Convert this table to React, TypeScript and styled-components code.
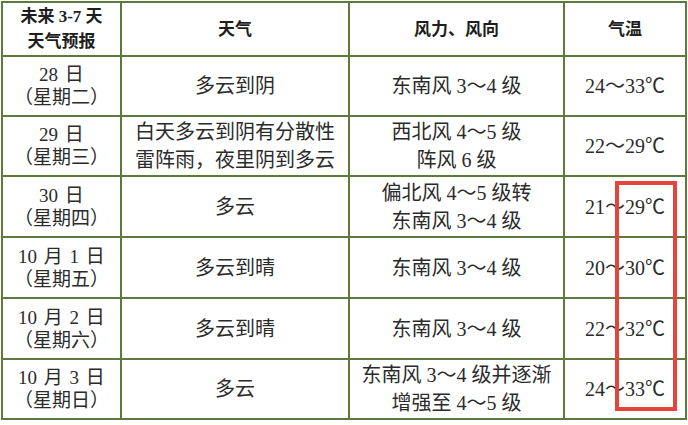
import React from "react";
import styled, { createGlobalStyle } from "styled-components";

const Global = createGlobalStyle`
  html, body { margin: 0; padding: 0; background: #ffffff; }
  body { font-family: "Liberation Serif", "Noto Sans CJK SC", serif; }
`;

const LINE = "#5b7a3c";

const Page = styled.div`
  position: relative;
  width: 688px;
  height: 425px;
  padding: 1px 0 0 1px;
  box-sizing: border-box;
  overflow: hidden;
`;

const Table = styled.table`
  border-collapse: collapse;
  table-layout: fixed;
  width: 684px;
  color: #2b2b2b;
`;

const Row = styled.tr<{ $h: number }>`
  height: ${(p) => p.$h}px;
`;

const HeadCell = styled.th`
  border: 2px solid ${LINE};
  padding: 0;
  font-family: "Liberation Serif", "Noto Sans CJK SC", serif;
  font-weight: 700;
  font-size: 17px;
  line-height: 25px;
  text-align: center;
  vertical-align: middle;
  color: #1e1e1e;
`;

const Cell = styled.td<{ $kind?: "date" | "text" }>`
  border: 2px solid ${LINE};
  padding: 0;
  font-family: "Liberation Serif", "Noto Sans CJK SC", serif;
  font-weight: 400;
  font-size: ${(p) => (p.$kind === "date" ? 19 : 20)}px;
  line-height: ${(p) => (p.$kind === "date" ? 23 : 28)}px;
  word-spacing: ${(p) => (p.$kind === "date" ? 2 : 0)}px;
  text-align: center;
  vertical-align: middle;
  white-space: nowrap;
`;

const Highlight = styled.div`
  position: absolute;
  left: 615px;
  top: 181px;
  width: 62px;
  height: 230px;
  box-sizing: border-box;
  border: 4px solid #e5443b;
  pointer-events: none;
`;

type Day = { date: string; week: string; weather: string[]; wind: string[]; temp: string };

const days: Day[] = [
  { date: "28 日", week: "（星期二）", weather: ["多云到阴"], wind: ["东南风 3～4 级"], temp: "24～33℃" },
  { date: "29 日", week: "（星期三）", weather: ["白天多云到阴有分散性", "雷阵雨，夜里阴到多云"], wind: ["西北风 4～5 级", "阵风 6 级"], temp: "22～29℃" },
  { date: "30 日", week: "（星期四）", weather: ["多云"], wind: ["偏北风 4～5 级转", "东南风 3～4 级"], temp: "21～29℃" },
  { date: "10 月 1 日", week: "（星期五）", weather: ["多云到晴"], wind: ["东南风 3～4 级"], temp: "20～30℃" },
  { date: "10 月 2 日", week: "（星期六）", weather: ["多云到晴"], wind: ["东南风 3～4 级"], temp: "22～32℃" },
  { date: "10 月 3 日", week: "（星期日）", weather: ["多云"], wind: ["东南风 3～4 级并逐渐", "增强至 4～5 级"], temp: "24～33℃" },
];

const heights = [60, 60, 61, 61, 61, 60];

const Lines = ({ items }: { items: string[] }) => (
  <>
    {items.map((t, i) => (
      <React.Fragment key={i}>
        {i > 0 && <br />}
        {t}
      </React.Fragment>
    ))}
  </>
);

export default function App() {
  return (
    <Page>
      <Global />
      <Table>
        <colgroup>
          <col style={{ width: 119 }} />
          <col style={{ width: 228 }} />
          <col style={{ width: 215 }} />
          <col style={{ width: 122 }} />
        </colgroup>
        <thead>
          <Row $h={54}>
            <HeadCell>
              未来 3-7 天
              <br />
              天气预报
            </HeadCell>
            <HeadCell>天气</HeadCell>
            <HeadCell>风力、风向</HeadCell>
            <HeadCell>气温</HeadCell>
          </Row>
        </thead>
        <tbody>
          {days.map((d, i) => (
            <Row key={d.date} $h={heights[i]}>
              <Cell $kind="date">
                {d.date}
                <br />
                {d.week}
              </Cell>
              <Cell>
                <Lines items={d.weather} />
              </Cell>
              <Cell>
                <Lines items={d.wind} />
              </Cell>
              <Cell>{d.temp}</Cell>
            </Row>
          ))}
        </tbody>
      </Table>
      <Highlight />
    </Page>
  );
}
